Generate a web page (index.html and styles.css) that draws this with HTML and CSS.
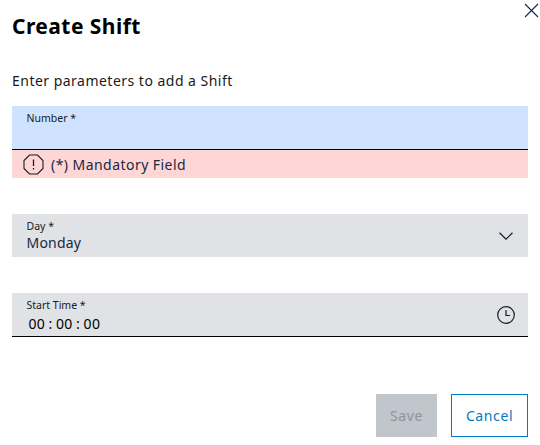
FILE: index.html
```html
<!DOCTYPE html>
<html lang="en">
<head>
  <meta charset="UTF-8">
  <title>Create Shift</title>
  <link rel="stylesheet" href="styles.css">
</head>
<body>
  <div class="dialog">
    <button class="close-btn" aria-label="Close">
      <svg width="15" height="15" viewBox="0 0 15 15" fill="none" stroke="#0b2a4a" stroke-width="1.1"><path d="M1 1L14 14M14 1L1 14"/></svg>
    </button>
    <h1>Create Shift</h1>
    <p class="intro">Enter parameters to add a Shift</p>

    <div class="field-group">
      <div class="field field-active">
        <label>Number *</label>
        <div class="value"></div>
      </div>
      <div class="error-msg">
        <svg width="21" height="21" viewBox="0 0 21 21" fill="none" stroke="#1a1a2a" stroke-width="1.1">
          <path d="M6.5 1h8L20 6.5v8L14.5 20h-8L1 14.5v-8z"/>
          <path d="M10.5 5.5V12M10.5 14v1.6" stroke-width="1.3"/>
        </svg>
        <span>(*) Mandatory Field</span>
      </div>
    </div>

    <div class="field-group">
      <div class="field field-plain">
        <div>
          <label>Day *</label>
          <div class="value">Monday</div>
        </div>
        <svg class="field-icon" width="14" height="8" viewBox="0 0 14 8" fill="none" stroke="#1a1a2a" stroke-width="1.2"><path d="M.5.8L7 7.2L13.5.8"/></svg>
      </div>
    </div>

    <div class="field-group">
      <div class="field">
        <div>
          <label>Start Time *</label>
          <div class="value time">00 : 00 : 00</div>
        </div>
        <svg class="clock" width="18" height="18" viewBox="0 0 18 18" fill="none" stroke="#1a1a2a" stroke-width="1.2">
          <circle cx="9" cy="9" r="8.3"/>
          <path d="M9 4v5.5h4"/>
        </svg>
      </div>
    </div>

    <div class="actions">
      <button class="btn btn-save" disabled>Save</button>
      <button class="btn btn-cancel">Cancel</button>
    </div>
  </div>
</body>
</html>
```

FILE: styles.css
```css
body {
  margin: 0;
  background-color: #fff;
  font-family: "Noto Sans", Arial, sans-serif;
  color: #000;
}

.dialog {
  position: relative;
  width: 516px;
  height: 445px;
  padding: 0 12px;
  overflow: hidden;
}

.close-btn {
  position: absolute;
  top: 3px;
  right: 1px;
  width: 15px;
  height: 15px;
  padding: 0;
  border: none;
  background: none;
}

.close-btn svg {
  display: block;
}

h1 {
  margin: 0;
  padding-top: 13px;
  font-size: 21px;
  line-height: 26px;
  font-weight: 700;
  letter-spacing: 0.45px;
}

.intro {
  margin: 32px 0 16px;
  font-size: 14px;
  line-height: 19px;
  letter-spacing: 0.48px;
  color: #1a1a1a;
}

.field-group {
  margin-bottom: 36px;
}

.field {
  display: flex;
  justify-content: space-between;
  align-items: center;
  height: 43px;
  padding: 0 14px 0 14.5px;
  background-color: #e0e2e5;
  border-bottom: 1px solid #000;
}

.field > div {
  align-self: flex-start;
}

.field label {
  display: block;
  padding-top: 5px;
  font-size: 10.5px;
  line-height: 14px;
  color: #1a1a1a;
}

.field .value {
  font-size: 14px;
  line-height: 20px;
  letter-spacing: 0.2px;
  color: #16293f;
}

.field .time {
  padding: 2px 0 0 2px;
  letter-spacing: 0.3px;
  word-spacing: -0.5px;
  color: #000;
}

.field-active {
  display: block;
  background-color: #cfe2ff;
}

.field-plain {
  border-bottom: none;
}

.error-msg {
  display: flex;
  align-items: center;
  gap: 7px;
  height: 28px;
  padding-left: 11px;
  background-color: #ffd6d6;
  font-size: 14px;
  letter-spacing: 0.45px;
  color: #16293f;
}

.field-icon {
  margin-right: 1px;
}

.clock {
  margin: 1px -1px 0 0;
}

.actions {
  display: flex;
  justify-content: flex-end;
  gap: 14px;
  margin-top: 57px;
}

.btn {
  height: 43px;
  font-family: inherit;
  font-size: 14px;
  letter-spacing: 0.6px;
}

.btn-save {
  width: 61px;
  border: none;
  background-color: #c1c5cc;
  color: #8f949b;
}

.btn-cancel {
  width: 77px;
  border: 1px solid #007bc0;
  background-color: #fff;
  color: #007bc0;
}
```
